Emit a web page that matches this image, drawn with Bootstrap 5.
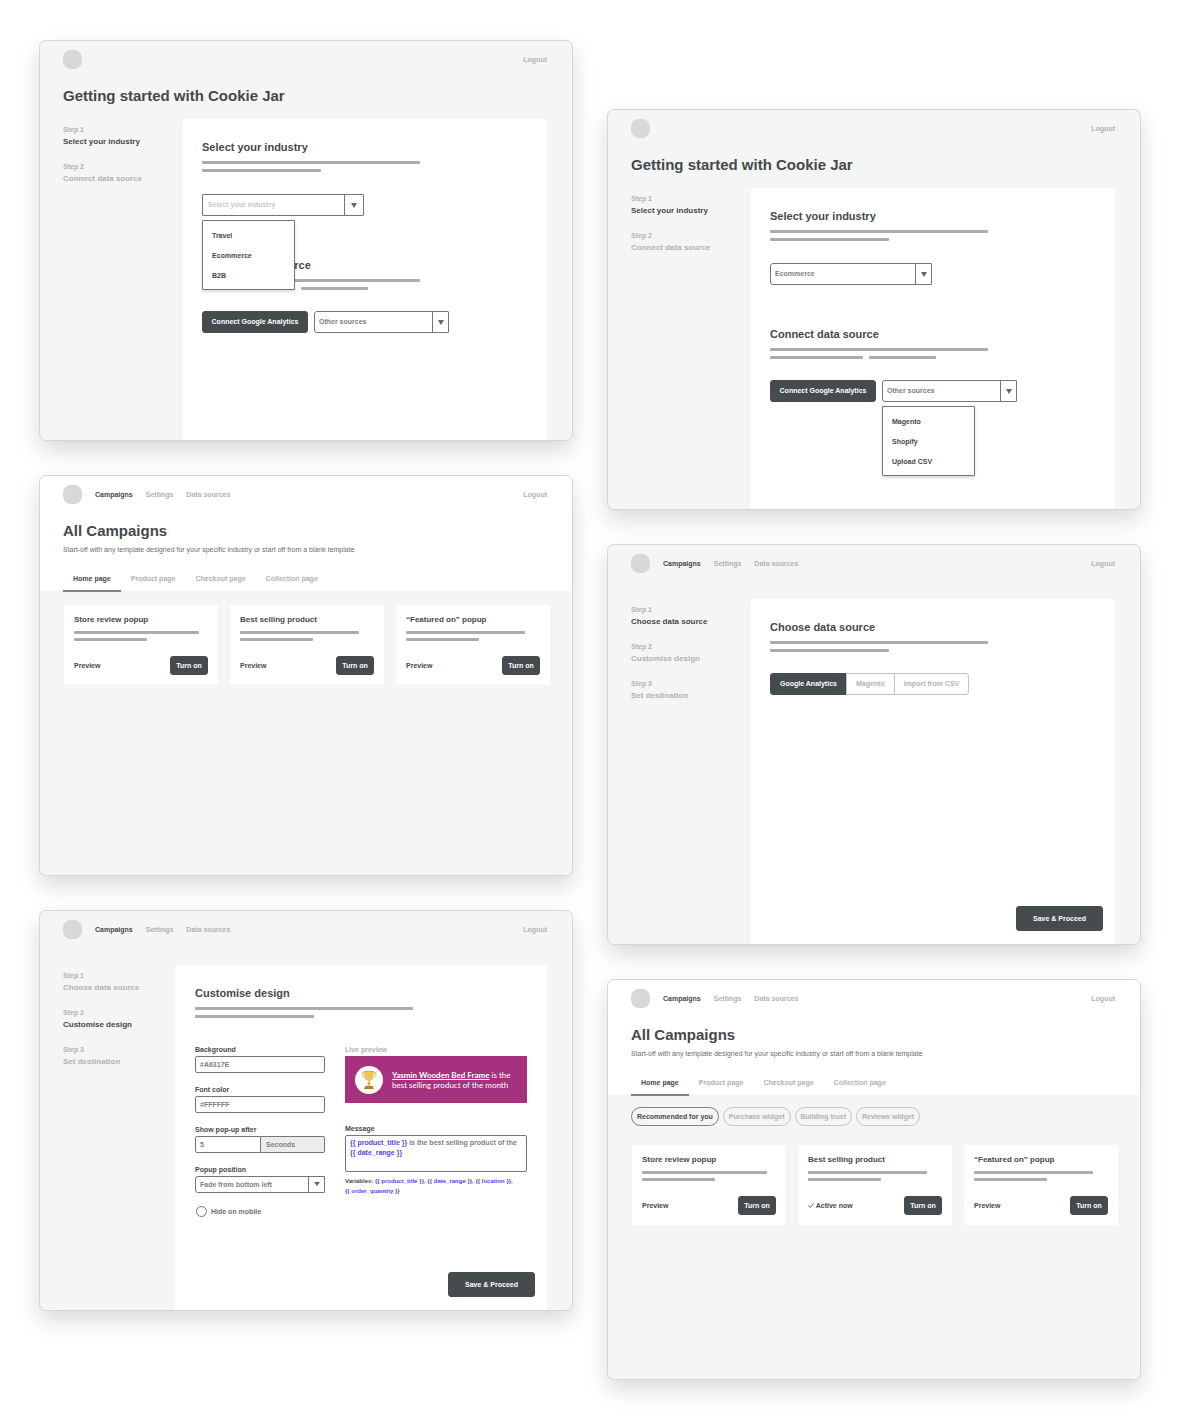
<!DOCTYPE html>
<html lang="en">
<head>
<meta charset="utf-8">
<meta name="viewport" content="width=device-width, initial-scale=1">
<title>Cookie Jar wireframes</title>
<link href="https://cdn.jsdelivr.net/npm/bootstrap@5.3.0/dist/css/bootstrap.min.css" rel="stylesheet">
<style>
:root{--ink:#44494b;--mute:#b2b2b2;--rule:#757575;--fill:#464b4d;--soft:#f5f5f5;--code:#5a3fe6}
body{font:700 7px/12px "Liberation Sans",Arial,sans-serif;color:var(--ink);background:#fff}
a{text-decoration:none;color:inherit}
.board{padding:40px 39px 39px;gap:34px}
.lane{flex:1 1 0;min-width:0;gap:34px}
.lane-late{padding-top:69px}
.frame{min-height:401px;border:1px solid #d6d6d6;border-radius:7px;background:var(--soft);box-shadow:0 10px 22px rgba(0,0,0,.15);overflow:hidden}
.topbar{height:37px;padding:0 25px 0 23px;gap:13px;color:var(--mute)}
.topbar .current{color:var(--ink)}
.avatar{width:19px;height:19px;border-radius:8px;background:#d8d8d8}
h1{font-size:15px;line-height:20px;font-weight:700;margin:8px 0 0;padding:0 23px}
h2{font-size:11px;line-height:16px;font-weight:700;margin:0 0 6px}
h3{font-size:8px;line-height:12px;font-weight:700;margin:0 0 5px}
.split{padding:0 25px 0 23px}
.after-title{margin-top:13px}
.after-bar{margin-top:17px}
.steps{width:119px;padding:5px 0 0;font-size:8px;color:var(--mute);list-style:none;margin:0;flex:none}
.steps-slim{width:112px}
.steps li{margin-bottom:13px}
.steps small{display:block;font-size:7px;line-height:12px;color:var(--mute)}
.steps .now{color:var(--ink)}
.sheet{background:#fff;border-radius:4px 4px 0 0;padding:20px 20px 0;min-width:0}
.line{height:3px;border-radius:1px;background:#acacac;margin-bottom:5px}
.line-a{width:218px}.line-b{width:119px}.line-c{width:93px}.line-d{width:67px}
.card-line-a{width:125px}.card-line-b{width:119px}.card-line-s{width:73px}
.field-top{margin-top:22px}
.second{margin-top:41px}
.sources{margin-top:16px}
.row-tight{gap:6px}
.pick{position:relative;height:22px;width:162px;border:1px solid var(--rule);border-radius:3px 1px 1px 3px;background:#fff}
.pick select{appearance:none;border:0;background:none;width:100%;height:100%;padding:0 20px 0 4px;font:inherit;color:#808080;outline-offset:2px}
.pick .arrow{position:absolute;top:0;right:0;bottom:0;width:16px;border-left:1px solid var(--rule);pointer-events:none}
.arrow svg{display:block;width:6px;height:5px}
.pick-wide{border-radius:1px}
.pick-wide .arrow{width:19px}
.pick-wide select{padding-left:5px;color:#c8c8c8}
.pick-other{width:135px}
.pick-small{width:100%;height:17px}
.drop{position:absolute;left:-1px;top:25px;z-index:5;width:93px;height:70px;margin:0;padding:5px 0 0;list-style:none;background:#fff;border:1px solid var(--rule);border-radius:1px;box-shadow:0 2px 3px rgba(0,0,0,.15)}
.drop a{display:block;padding:4px 9px;line-height:12px}
.btn{--bs-btn-padding-x:0;--bs-btn-padding-y:0;--bs-btn-font-size:7px;--bs-btn-font-weight:700;--bs-btn-line-height:12px;--bs-btn-border-radius:3px;font-family:inherit}
.btn-ink{--bs-btn-color:#fff;--bs-btn-bg:var(--fill);--bs-btn-border-color:var(--fill);--bs-btn-hover-bg:#303436;--bs-btn-hover-color:#fff}
.btn-connect{width:106px;height:22px}
.btn-turn{width:38px;height:19px}
.btn-save{width:87px;height:25px}
.segments .btn{height:22px;padding:0 9px;color:var(--mute);border-color:#c2c2c2;background:#fff}
.segments .btn.on{color:#fff;background:var(--fill);border-color:var(--fill)}
.tall{min-height:345px}
.sheet-foot{margin:auto -8px 13px auto}
.masthead{background:#fff;height:115px}
.lede{font-size:7px;font-weight:400;line-height:10px;color:#6c6c6c;margin:4px 23px 0}
.tabs{margin:17px 23px 0;color:var(--mute)}
.tabs a{height:20px;padding:1px 10px 0;border-bottom:2px solid transparent}
.tabs .current{color:var(--ink);border-color:#7c8284}
.offers{padding:0 22px 0 24px;gap:12px;margin-top:14px}
.offer{flex:1 1 0;min-width:0;background:#fff;border-radius:1px;padding:9px 10px 10px;height:80px}
.offer .line{margin-bottom:4px}
.chips{padding:12px 23px 0;gap:4px}
.chips button{height:19px;border:1px solid #c4c4c4;border-radius:10px;background:none;color:var(--mute);padding:0 5px;font-weight:inherit;line-height:12px}
.chips .on{border-color:#7c8284;color:var(--ink)}
.chips + .offers{margin-top:19px}
.form-gap{margin-top:20px;gap:20px}
.form-left{width:130px;flex:none}
.form-right{flex:1;min-width:0}
.form-left label,.cap{display:block;line-height:13px;margin:0}
.cap-mute{color:var(--mute)}
.cap-next{margin-top:19px}
.unit{margin-bottom:10px}
.box{display:block;width:100%;height:17px;border:1px solid var(--rule);border-radius:2px;padding:0 4px;font:inherit;color:#808080;background:#fff}
.suffix{border:1px solid var(--rule);border-left:0;border-radius:0 2px 2px 0;background:#ececec;color:#808080;padding:0 5px;line-height:15px;flex:1}
.sheet .seconds{width:66px;border-radius:2px 0 0 2px}
.ring{appearance:none;width:11px;height:11px;border:1px solid #777;border-radius:50%;margin:0 4px 0 1px}
.ring:checked{background:#777}
.ring-row{margin-top:12px}
.sheet .ring-text{color:#707070}
.promo{background:#a6317e;color:#fff;height:47px;padding:0 10px;gap:9px;font:8px/10px Lato,sans-serif;white-space:nowrap}
.message{border:1px solid var(--rule);border-radius:2px;height:37px;padding:2px 4px;line-height:10px;color:#808080}
.code{color:var(--code)}
.vars{font-size:6px;line-height:10px;margin-top:4px}
</style>
<script src="https://cdn.jsdelivr.net/npm/bootstrap@5.3.0/dist/js/bootstrap.bundle.min.js"></script>
</head>
<body>
<main class="board d-flex align-items-start">

<div class="lane d-flex flex-column">
  <section class="frame">
    <header class="topbar d-flex align-items-center"><span class="avatar"></span><a class="ms-auto" href="#">Logout</a></header>
    <h1>Getting started with Cookie Jar</h1>
    <div class="split after-title d-flex">
      <ul class="steps"><li class="now"><small>Step 1</small>Select your industry</li><li><small>Step 2</small>Connect data source</li></ul>
      <div class="sheet flex-fill" style="min-height:321px">
        <h2>Select your industry</h2>
        <div class="line line-a"></div><div class="line line-b"></div>
        <div class="pick pick-wide field-top">
          <select aria-label="Industry"><option>Select your industry</option><option>Travel</option><option>Ecommerce</option><option>B2B</option></select>
          <span class="arrow d-flex align-items-center justify-content-center"><svg viewBox="0 0 6 5"><path d="M0 0h6L3 5z" fill="#666"/></svg></span>
          <ul class="drop"><li><a href="#">Travel</a></li><li><a href="#">Ecommerce</a></li><li><a href="#">B2B</a></li></ul>
        </div>
        <h2 class="second">Connect data source</h2>
        <div class="line line-a"></div><div class="row-tight d-flex"><div class="line line-c"></div><div class="line line-d"></div></div>
        <div class="d-flex sources row-tight">
          <button class="btn btn-ink btn-connect">Connect Google Analytics</button>
          <div class="pick pick-other"><select aria-label="Other sources"><option>Other sources</option></select><span class="arrow d-flex align-items-center justify-content-center"><svg viewBox="0 0 6 5"><path d="M0 0h6L3 5z" fill="#666"/></svg></span></div>
        </div>
      </div>
    </div>
  </section>

  <section class="frame">
    <div class="masthead">
      <header class="topbar d-flex align-items-center"><span class="avatar"></span><a class="current" href="#">Campaigns</a><a href="#">Settings</a><a href="#">Data sources</a><a class="ms-auto" href="#">Logout</a></header>
      <h1>All Campaigns</h1>
      <p class="lede">Start-off with any template designed for your specific industry or start off from a blank template</p>
      <nav class="tabs d-flex"><a class="current" href="#">Home page</a><a href="#">Product page</a><a href="#">Checkout page</a><a href="#">Collection page</a></nav>
    </div>
    <div class="offers d-flex">
      <article class="offer d-flex flex-column"><h3>Store review popup</h3><div class="line card-line-a"></div><div class="line card-line-s"></div><div class="d-flex justify-content-between align-items-center mt-auto"><a href="#">Preview</a><button class="btn btn-ink btn-turn">Turn on</button></div></article>
      <article class="offer d-flex flex-column"><h3>Best selling product</h3><div class="line card-line-b"></div><div class="line card-line-s"></div><div class="d-flex justify-content-between align-items-center mt-auto"><a href="#">Preview</a><button class="btn btn-ink btn-turn">Turn on</button></div></article>
      <article class="offer d-flex flex-column"><h3>“Featured on” popup</h3><div class="line card-line-b"></div><div class="line card-line-s"></div><div class="d-flex justify-content-between align-items-center mt-auto"><a href="#">Preview</a><button class="btn btn-ink btn-turn">Turn on</button></div></article>
    </div>
  </section>

  <section class="frame">
    <header class="topbar d-flex align-items-center"><span class="avatar"></span><a class="current" href="#">Campaigns</a><a href="#">Settings</a><a href="#">Data sources</a><a class="ms-auto" href="#">Logout</a></header>
    <div class="split after-bar d-flex">
      <ul class="steps steps-slim"><li><small>Step 1</small>Choose data source</li><li class="now"><small>Step 2</small>Customise design</li><li><small>Step 3</small>Set destination</li></ul>
      <form class="sheet tall flex-fill d-flex flex-column">
        <h2>Customise design</h2>
        <div class="line line-a"></div><div class="line line-b"></div>
        <div class="form-gap d-flex">
          <div class="form-left">
            <div class="unit"><label for="bg">Background</label><input class="box" id="bg" value="#A6317E"></div>
            <div class="unit"><label for="fc">Font color</label><input class="box" id="fc" value="#FFFFFF"></div>
            <div class="unit"><label for="delay">Show pop-up after</label><div class="d-flex"><input class="box seconds" id="delay" value="5"><span class="suffix">Seconds</span></div></div>
            <div class="unit"><label for="pos">Popup position</label><div class="pick pick-small"><select id="pos"><option>Fade from bottom left</option></select><span class="arrow d-flex align-items-center justify-content-center"><svg viewBox="0 0 6 5"><path d="M0 0h6L3 4z" fill="#666"/></svg></span></div></div>
            <div class="ring-row d-flex align-items-center"><input class="ring" type="radio" id="hide"><label class="ring-text" for="hide">Hide on mobile</label></div>
          </div>
          <div class="form-right">
            <span class="cap cap-mute">Live preview</span>
            <div class="promo d-flex align-items-center">
              <svg class="flex-shrink-0" width="28" height="28" viewBox="0 0 28 28"><circle cx="14" cy="14" r="14" fill="#fff"/><path d="M9.500 6.500H7.200c0 3.500 1.200 5.500 4 6.200M18.500 6.500h2.300c0 3.500-1.200 5.500-4 6.200" fill="none" stroke="#eebf55"/><path d="M9 5h10c0 5-.8 8.500-4 10v2.500c0 1.500.7 2.500 2 3h-6c1.300-.5 2-1.500 2-3V15c-3.200-1.500-4-5-4-10z" fill="#f0c25c"/><path d="M9 5h10v1H9z" fill="#d9a03d"/><path d="M10 20h8v1l1 2H9l1-2z" fill="#b9822f"/><path d="M12.500 17h3v1h-3z" fill="#d9a03d"/></svg>
              <div><b class="text-decoration-underline">Yasmin Wooden Bed Frame</b> is the<br>best selling product of the month</div>
            </div>
            <span class="cap cap-next" id="msg">Message</span>
            <div class="message" contenteditable="true" role="textbox" aria-multiline="true" aria-labelledby="msg"><span class="code">{{ product_title }}</span> is the best selling product of the<br><span class="code">{{ date_range }}</span></div>
            <div class="vars">Variables: <span class="code">{{ product_title }}, {{ date_range }}, {{ location }},</span><br><span class="code">{{ order_quantity }}</span></div>
          </div>
        </div>
        <button type="button" class="btn btn-ink btn-save sheet-foot">Save &amp; Proceed</button>
      </form>
    </div>
  </section>
</div>

<div class="lane lane-late d-flex flex-column">
  <section class="frame">
    <header class="topbar d-flex align-items-center"><span class="avatar"></span><a class="ms-auto" href="#">Logout</a></header>
    <h1>Getting started with Cookie Jar</h1>
    <div class="split after-title d-flex">
      <ul class="steps"><li class="now"><small>Step 1</small>Select your industry</li><li><small>Step 2</small>Connect data source</li></ul>
      <div class="sheet flex-fill" style="min-height:321px">
        <h2>Select your industry</h2>
        <div class="line line-a"></div><div class="line line-b"></div>
        <div class="pick field-top"><select aria-label="Industry"><option>Ecommerce</option></select><span class="arrow d-flex align-items-center justify-content-center"><svg viewBox="0 0 6 5"><path d="M0 0h6L3 5z" fill="#666"/></svg></span></div>
        <h2 class="second">Connect data source</h2>
        <div class="line line-a"></div><div class="row-tight d-flex"><div class="line line-c"></div><div class="line line-d"></div></div>
        <div class="d-flex sources row-tight">
          <button class="btn btn-ink btn-connect">Connect Google Analytics</button>
          <div class="pick pick-other"><select aria-label="Other sources"><option>Other sources</option></select><span class="arrow d-flex align-items-center justify-content-center"><svg viewBox="0 0 6 5"><path d="M0 0h6L3 5z" fill="#666"/></svg></span>
            <ul class="drop"><li><a href="#">Magento</a></li><li><a href="#">Shopify</a></li><li><a href="#">Upload CSV</a></li></ul>
          </div>
        </div>
      </div>
    </div>
  </section>

  <section class="frame">
    <header class="topbar d-flex align-items-center"><span class="avatar"></span><a class="current" href="#">Campaigns</a><a href="#">Settings</a><a href="#">Data sources</a><a class="ms-auto" href="#">Logout</a></header>
    <div class="split after-bar d-flex">
      <ul class="steps"><li class="now"><small>Step 1</small>Choose data source</li><li><small>Step 2</small>Customise design</li><li><small>Step 3</small>Set destination</li></ul>
      <div class="sheet tall flex-fill d-flex flex-column">
        <h2>Choose data source</h2>
        <div class="line line-a"></div><div class="line line-b"></div>
        <div class="btn-group segments align-self-start mt-3" role="group" aria-label="Data source"><button class="btn on">Google Analytics</button><button class="btn">Magento</button><button class="btn">Import from CSV</button></div>
        <button class="btn btn-ink btn-save sheet-foot">Save &amp; Proceed</button>
      </div>
    </div>
  </section>

  <section class="frame">
    <div class="masthead">
      <header class="topbar d-flex align-items-center"><span class="avatar"></span><a class="current" href="#">Campaigns</a><a href="#">Settings</a><a href="#">Data sources</a><a class="ms-auto" href="#">Logout</a></header>
      <h1>All Campaigns</h1>
      <p class="lede">Start-off with any template designed for your specific industry or start off from a blank template</p>
      <nav class="tabs d-flex"><a class="current" href="#">Home page</a><a href="#">Product page</a><a href="#">Checkout page</a><a href="#">Collection page</a></nav>
    </div>
    <div class="chips d-flex"><button class="on">Recommended for you</button><button>Purchase widget</button><button>Building trust</button><button>Reviews widget</button></div>
    <div class="offers d-flex">
      <article class="offer d-flex flex-column"><h3>Store review popup</h3><div class="line card-line-a"></div><div class="line card-line-s"></div><div class="d-flex justify-content-between align-items-center mt-auto"><a href="#">Preview</a><button class="btn btn-ink btn-turn">Turn on</button></div></article>
      <article class="offer d-flex flex-column"><h3>Best selling product</h3><div class="line card-line-b"></div><div class="line card-line-s"></div><div class="d-flex justify-content-between align-items-center mt-auto"><span><svg width="6" height="5" viewBox="0 0 6 5"><path d="M.5 2.500l1.700 2L5.500.5" fill="none" stroke="#44494b" stroke-width=".8"/></svg> Active now</span><button class="btn btn-ink btn-turn">Turn on</button></div></article>
      <article class="offer d-flex flex-column"><h3>“Featured on” popup</h3><div class="line card-line-b"></div><div class="line card-line-s"></div><div class="d-flex justify-content-between align-items-center mt-auto"><a href="#">Preview</a><button class="btn btn-ink btn-turn">Turn on</button></div></article>
    </div>
  </section>
</div>
</main>
</body>
</html>
